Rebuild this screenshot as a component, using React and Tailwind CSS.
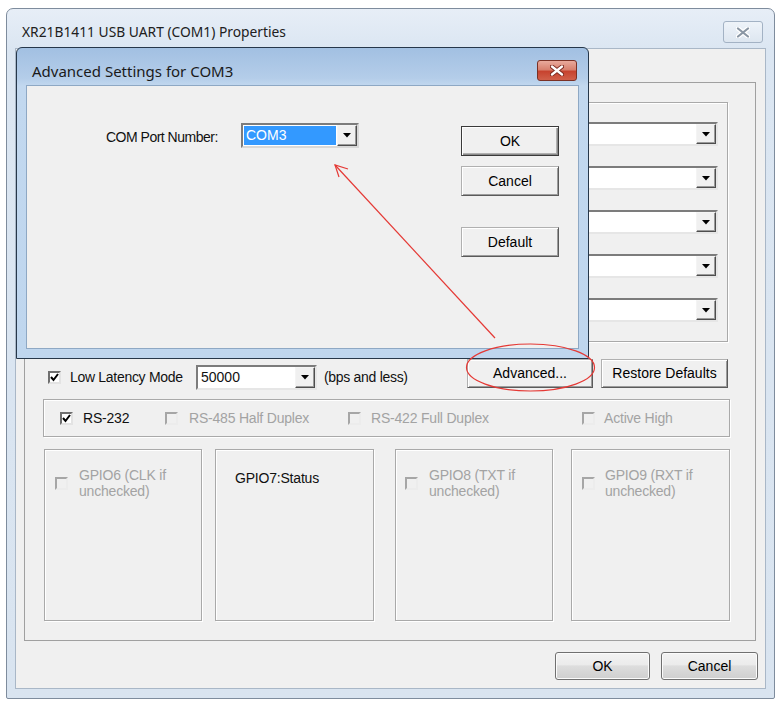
import React from "react";

const UI = { fontFamily: "'Liberation Sans',Arial,sans-serif" };
const TITLE = { fontFamily: "'Noto Sans','Open Sans',sans-serif" };

function Check({ checked, disabled }) {
  return (
    <span
      className={
        disabled
          ? "w-[13px] h-[13px] shrink-0 inline-flex items-center justify-center border-2 border-t-[#a6a6a6] border-l-[#a6a6a6] border-b-[#ececec] border-r-[#ececec] bg-[#f0f0f0]"
          : "w-[13px] h-[13px] shrink-0 inline-flex items-center justify-center border-2 border-t-[#6f6f6f] border-l-[#6f6f6f] border-b-[#e3e3e3] border-r-[#e3e3e3] bg-white"
      }
    >
      {checked && (
        <svg width="9" height="9" viewBox="0 0 9 9">
          <path d="M1 4 L3.5 7 L8 1" fill="none" stroke="#000" strokeWidth="2" />
        </svg>
      )}
    </span>
  );
}

function DropBtn() {
  return (
    <div className="w-[20px] self-stretch bg-[#f0f0f0] border border-t-[#f4f4f4] border-l-[#f4f4f4] border-b-[#4d4d4d] border-r-[#4d4d4d] shadow-[inset_-1px_-1px_0_#9a9a9a] flex items-center justify-center">
      <svg width="8" height="5" viewBox="0 0 8 5">
        <path d="M0 0 H8 L4 4.5 Z" fill="#000" />
      </svg>
    </div>
  );
}

function Combo({ className, children }) {
  return (
    <div className={"flex border-2 border-t-[#7c7c7c] border-l-[#7c7c7c] border-b-[#e6e6e6] border-r-[#e6e6e6] bg-white " + className}>
      <div className="flex-1 flex items-center overflow-hidden">{children}</div>
      <DropBtn />
    </div>
  );
}

function ClassicBtn({ className, children, def }) {
  return (
    <div
      className={
        (def
          ? "border border-[#3a3a3a] shadow-[inset_1px_1px_0_#fff,inset_-1px_-1px_0_#8a8a8a,inset_-2px_-2px_0_#b0b0b0] "
          : "border border-t-[#b0b0b0] border-l-[#b0b0b0] border-b-[#5a5a5a] border-r-[#5a5a5a] shadow-[inset_1px_1px_0_#fff,inset_-1px_-1px_0_#9c9c9c] ") +
        "bg-[#f0f0f0] flex items-center justify-center text-[14px] text-black whitespace-nowrap " +
        className
      }
    >
      {children}
    </div>
  );
}

function AeroBtn({ className, children }) {
  return (
    <div
      className={
        "rounded-[3px] border border-[#707070] bg-[linear-gradient(to_bottom,#f3f3f3,#ebebeb_45%,#dddddd_50%,#cfcfcf)] shadow-[inset_0_0_0_1px_#fbfbfb] flex items-center justify-center text-[14px] text-black " +
        className
      }
    >
      {children}
    </div>
  );
}

function Group({ className, children }) {
  return (
    <div className={"border border-[#a9a9a9] shadow-[1px_1px_0_#fff,inset_1px_1px_0_#fff] " + className}>
      {children}
    </div>
  );
}

export default function App() {
  const rows = [0, 1, 2, 3, 4];
  return (
    <div className="relative w-[782px] h-[711px] bg-white overflow-hidden text-[13px] text-[#111]" style={UI}>
      <div className="pt-[8px] pl-[6px]">
        {/* Outer properties window */}
        <div className="w-[769px] h-[691px] flex flex-col rounded-t-[7px] rounded-b-[2px] border border-[#7e8c9d] bg-[linear-gradient(to_bottom,#e7eef7,#dbe6f2_40px,#d9e4f0)]">
          <div className="h-[39px] flex items-start pl-[15px] pr-[11px] shrink-0">
            <div className="pt-[14px] leading-[18px] text-[13.8px] text-[#202020]" style={TITLE}>
              XR21B1411 USB UART (COM1) Properties
            </div>
            <div className="ml-auto mt-[12px] w-[40px] h-[22px] rounded-[3px] border border-[#a3b2c4] bg-[linear-gradient(to_bottom,#eef3f9,#dde6f0)] flex items-center justify-center">
              <svg width="14" height="11" viewBox="0 0 14 11">
                <path d="M2 1.5 L12 9.5 M12 1.5 L2 9.5" stroke="#fff" strokeWidth="4.5" strokeLinecap="round" />
                <path d="M2 1.5 L12 9.5 M12 1.5 L2 9.5" stroke="#8a96a4" strokeWidth="2.2" strokeLinecap="round" />
              </svg>
            </div>
          </div>

          <div className="mx-[8px] flex-1 bg-[#f0f0f0] border border-[#a9b7c7] flex flex-col">
            {/* tab page */}
            <div className="mt-[33px] ml-[8px] mr-[9px] h-[559px] border border-[#a0a0a0] bg-[#f0f0f0] flex flex-col">
              <Group className="ml-[19px] mr-[27px] mt-[19px] h-[240px] flex flex-col items-end pt-[19px] pr-[9px] gap-[20px]">
                {rows.map((r) => (
                  <Combo key={r} className="w-[200px] h-[24px]" />
                ))}
              </Group>

              <div className="flex items-start ml-[23px] mr-[27px] mt-[17px]">
                <div className="flex items-center mt-[6px] text-[14px]">
                  <Check checked />
                  <span className="ml-[9px] w-[126px] whitespace-nowrap tracking-[-0.3px]">Low Latency Mode</span>
                  <Combo className="w-[121px] h-[25px]">
                    <span className="pl-[3px]">50000</span>
                  </Combo>
                  <span className="ml-[7px] whitespace-nowrap tracking-[-0.3px]">(bps and less)</span>
                </div>
                <ClassicBtn className="ml-auto w-[126px] h-[29px]">Advanced...</ClassicBtn>
                <ClassicBtn className="ml-[8px] w-[127px] h-[29px]">Restore Defaults</ClassicBtn>
              </div>

              <Group className="ml-[18px] w-[687px] h-[38px] mt-[9px] flex items-center text-[14px] tracking-[-0.2px]">
                <div className="flex items-center w-[121px] pl-[16px]">
                  <Check checked />
                  <span className="ml-[10px]">RS-232</span>
                </div>
                <div className="flex items-center w-[183px] text-[#a3a3a3]">
                  <Check disabled />
                  <span className="ml-[11px] whitespace-nowrap">RS-485 Half Duplex</span>
                </div>
                <div className="flex items-center w-[234px] text-[#a3a3a3]">
                  <Check disabled />
                  <span className="ml-[10px] whitespace-nowrap">RS-422 Full Duplex</span>
                </div>
                <div className="flex items-center text-[#a3a3a3]">
                  <Check disabled />
                  <span className="ml-[9px] whitespace-nowrap">Active High</span>
                </div>
              </Group>

              <div className="flex ml-[19px] mt-[12px] h-[172px] text-[14px] leading-[16px] tracking-[-0.2px]">
                <Group className="w-[158px] h-full pl-[10px] pt-[17px]">
                  <div className="flex items-center text-[#a3a3a3]">
                    <Check disabled />
                    <span className="ml-[11px]">GPIO6 (CLK if<br />unchecked)</span>
                  </div>
                </Group>
                <Group className="ml-[13px] w-[159px] h-full pl-[19px] pt-[20px]">
                  <span>GPIO7:Status</span>
                </Group>
                <Group className="ml-[21px] w-[158px] h-full pl-[9px] pt-[17px]">
                  <div className="flex items-center text-[#a3a3a3]">
                    <Check disabled />
                    <span className="ml-[11px]">GPIO8 (TXT if<br />unchecked)</span>
                  </div>
                </Group>
                <Group className="ml-[18px] w-[159px] h-full pl-[10px] pt-[17px]">
                  <div className="flex items-center text-[#a3a3a3]">
                    <Check disabled />
                    <span className="ml-[10px]">GPIO9 (RXT if<br />unchecked)</span>
                  </div>
                </Group>
              </div>
            </div>

            <div className="flex justify-end mr-[7px] mt-[11px] gap-[11px]">
              <AeroBtn className="w-[95px] h-[28px]">OK</AeroBtn>
              <AeroBtn className="w-[97px] h-[28px]">Cancel</AeroBtn>
            </div>
          </div>
          <div className="h-[9px] shrink-0" />
        </div>
      </div>

      {/* Advanced Settings dialog (window on top) */}
      <div className="absolute left-[16px] top-[47px] w-[573px] h-[312px] rounded-t-[6px] border border-[#26374a] bg-[linear-gradient(to_bottom,#a2c0e2,#b4cde9_30px,#c2d8ef_38px,#bfd6ee)] flex flex-col">
        <div className="h-[37px] flex items-start pl-[15px] pr-[11px] shrink-0">
          <div className="pt-[14px] leading-[18px] text-[15px] text-[#1a1a1a]" style={TITLE}>
            Advanced Settings for COM3
          </div>
          <div className="ml-auto mt-[12px] w-[40px] h-[21px] rounded-[3px] border border-[#7a3125] bg-[linear-gradient(to_bottom,#e9aa9c,#d8816f_45%,#c7432f_55%,#d0604a)] flex items-center justify-center">
            <svg width="14" height="11" viewBox="0 0 14 11">
              <path d="M2 1.5 L12 9.5 M12 1.5 L2 9.5" stroke="#7b2a20" strokeWidth="4.2" strokeLinecap="round" />
              <path d="M2 1.5 L12 9.5 M12 1.5 L2 9.5" stroke="#fff" strokeWidth="2.3" strokeLinecap="round" />
            </svg>
          </div>
        </div>
        <div className="mx-[9px] mb-[9px] flex-1 bg-[#f0f0f0] border border-[#8ea8c4] flex pl-[79px] pr-[19px] pt-[37px]">
          <div className="flex items-center h-[25px] text-[14px]">
            <span className="w-[135px] whitespace-nowrap tracking-[-0.5px] pt-[4px]">COM Port Number:</span>
            <div className="flex w-[118px] h-[25px] border-2 border-t-[#7c7c7c] border-l-[#7c7c7c] border-b-[#d8d8d8] border-r-[#d8d8d8] bg-white">
              <div className="flex-1 flex items-center m-[1px] bg-[#3399ff] text-white pl-[2px]">COM3</div>
              <DropBtn />
            </div>
          </div>
          <div className="ml-auto flex flex-col pt-[3px]">
            <ClassicBtn def className="w-[98px] h-[30px]">OK</ClassicBtn>
            <ClassicBtn className="w-[98px] h-[30px] mt-[10px]">Cancel</ClassicBtn>
            <ClassicBtn className="w-[98px] h-[30px] mt-[31px]">Default</ClassicBtn>
          </div>
        </div>
      </div>

      {/* red annotations */}
      <svg className="absolute left-0 top-0 pointer-events-none" width="782" height="711" viewBox="0 0 782 711">
        <path d="M495 338 L335 165" stroke="#e53935" strokeWidth="1.2" fill="none" />
        <path d="M348 169 L335 165 L339 177" stroke="#e53935" strokeWidth="1.2" fill="none" />
        <ellipse cx="530.5" cy="367.5" rx="64" ry="23.5" stroke="#e53935" strokeWidth="1.2" fill="none" />
      </svg>
    </div>
  );
}
